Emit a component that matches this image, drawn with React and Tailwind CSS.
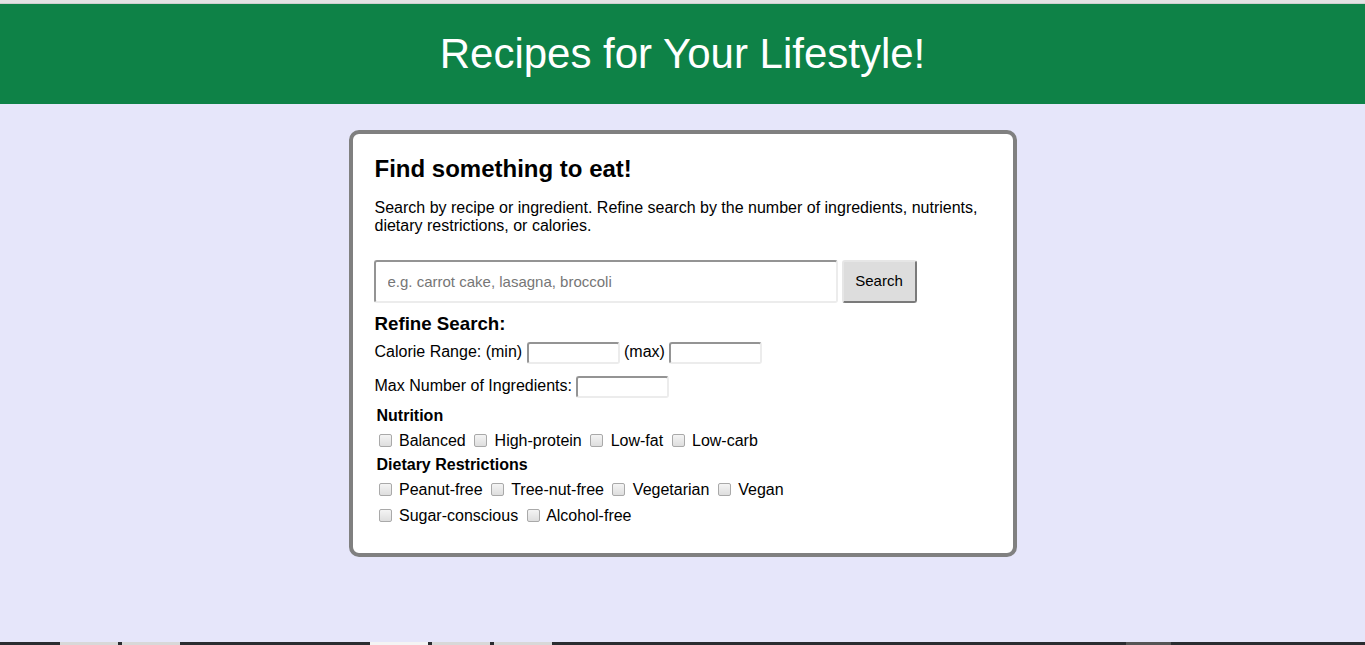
import React from "react";

function Check({ label }) {
  return (
    <>
      <input
        type="checkbox"
        className="appearance-none w-[13px] h-[13px] ml-[4px] mr-[3px] my-0 align-[-1px] border border-[#a9a9a9] rounded-[2px] bg-gradient-to-b from-[#f4f4f4] to-[#dedede]"
      />{" "}
      {label}{" "}
    </>
  );
}

const inset =
  "border-2 border-t-[#949494] border-l-[#949494] border-r-[#ececec] border-b-[#ececec] rounded-[3px] bg-white";

export default function App() {
  return (
    <div
      className="h-[645px] flex flex-col bg-[#e6e6fa] text-black"
      style={{ fontFamily: '"Liberation Sans", Arial, sans-serif' }}
    >
      <div className="h-[4px] bg-[#e3e3e3] border-b border-[#cfcfcf]" />
      <header className="h-[100px] bg-[#0e8247] flex items-center justify-center">
        <h1 className="text-white text-[42px] leading-[48px] font-normal">
          Recipes for Your Lifestyle!
        </h1>
      </header>
      <main className="flex-1">
        <div className="mx-auto mt-[26px] w-[668px] border-4 border-[#808080] rounded-[10px] bg-white pl-[22px] pr-[20px] pt-[21px] pb-[27px]">
          <h2 className="text-[24px] leading-[28px] font-bold">Find something to eat!</h2>
          <p className="mt-[16px] text-[16px] leading-[18px]">
            Search by recipe or ingredient. Refine search by the number of ingredients, nutrients,
            dietary restrictions, or calories.
          </p>
          <div className="mt-[25px] -ml-[1px] flex gap-[4px]">
            <input
              type="text"
              placeholder="e.g. carrot cake, lasagna, broccoli"
              className={`w-[464px] h-[43px] pl-[12px] text-[15px] placeholder:text-[#767676] outline-none ${inset}`}
            />
            <button className="w-[75px] h-[43px] text-[15px] bg-[#dddddd] rounded-[3px] border-2 border-t-[#e6e6e6] border-l-[#e6e6e6] border-r-[#7a7a7a] border-b-[#7a7a7a]">
              Search
            </button>
          </div>
          <h3 className="mt-[10px] text-[18.72px] leading-[22px] font-bold">Refine Search:</h3>
          <div className="mt-[6px] text-[16px] leading-[22px]">
            Calorie Range: (min){" "}
            <input type="text" className={`w-[93px] h-[22px] align-middle outline-none ${inset}`} />{" "}
            (max){" "}
            <input type="text" className={`w-[93px] h-[22px] align-middle outline-none ${inset}`} />
          </div>
          <div className="mt-[11px] text-[16px] leading-[22px]">
            Max Number of Ingredients:{" "}
            <input type="text" className={`w-[93px] h-[22px] align-middle outline-none ${inset}`} />
          </div>
          <div className="mt-[8px] pl-[2px] text-[16px] leading-[20px] font-bold">Nutrition</div>
          <div className="mt-[5px] text-[16px] leading-[20px]">
            <Check label="Balanced" />
            <Check label="High-protein" />
            <Check label="Low-fat" />
            <Check label="Low-carb" />
          </div>
          <div className="mt-[4px] pl-[2px] text-[16px] leading-[20px] font-bold">Dietary Restrictions</div>
          <div className="mt-[5px] text-[16px] leading-[20px]">
            <Check label="Peanut-free" />
            <Check label="Tree-nut-free" />
            <Check label="Vegetarian" />
            <Check label="Vegan" />
          </div>
          <div className="mt-[6px] text-[16px] leading-[20px]">
            <Check label="Sugar-conscious" />
            <Check label="Alcohol-free" />
          </div>
        </div>
      </main>
      <div className="h-[3px] bg-[#2a2d30] flex">
        <div className="ml-[60px] w-[58px] bg-[#d8d8d8]" />
        <div className="ml-[4px] w-[58px] bg-[#d8d8d8]" />
        <div className="ml-[190px] w-[58px] bg-[#f4f4f4]" />
        <div className="ml-[4px] w-[58px] bg-[#d8d8d8]" />
        <div className="ml-[4px] w-[58px] bg-[#d8d8d8]" />
        <div className="ml-[574px] w-[45px] bg-[#555]" />
      </div>
    </div>
  );
}
